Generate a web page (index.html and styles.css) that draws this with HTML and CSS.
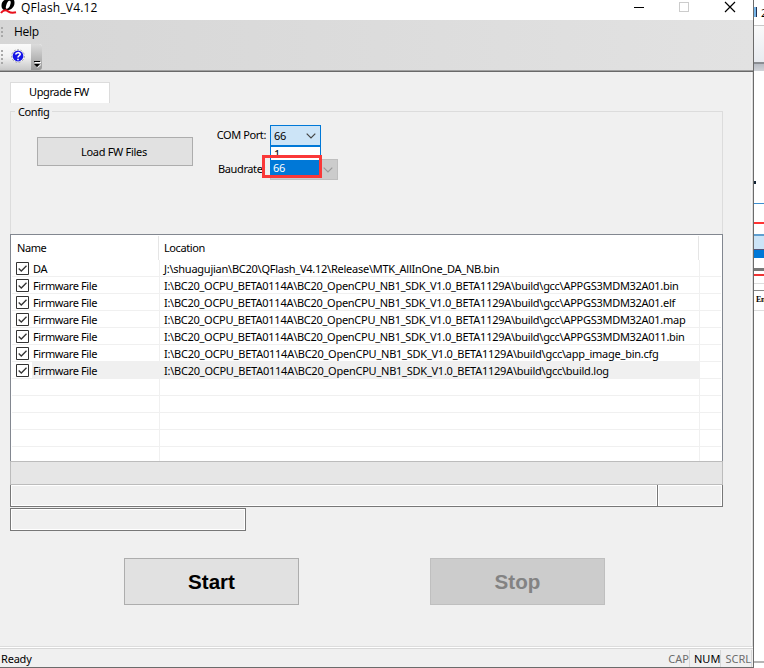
FILE: index.html
```html
<!DOCTYPE html>
<html lang="en">
<head>
<meta charset="utf-8">
<title>QFlash_V4.12</title>
<link rel="stylesheet" href="styles.css">
</head>
<body>
<div class="window">
  <header class="titlebar">
    <svg class="logo" width="17" height="15" viewBox="0 0 17 15"><path d="M8.500-1C4-1 1.500 2 1.500 5.500c0 3.500 2 5 5 5s8-2.500 8-7.500S12-1 8.500-1zM9.500.8c1.500 0 1.500 1.700.7 4.200S8 8.800 6.800 8.800 5.500 7.500 6.300 5 8 .8 9.500.8z" fill="#000" fill-rule="evenodd"/><path d="M1 13c2-3.500 5-3 7.500-1.400s4 1.500 7.500.7" fill="none" stroke="#e8101c" stroke-width="2"/></svg>
    <h1 class="title">QFlash_V4.12</h1>
    <svg class="controls" width="100" height="14" viewBox="0 0 100 14" shape-rendering="crispEdges"><path d="M0 7.500h10" stroke="#000"/><rect x="45.500" y="2.500" width="9" height="9" fill="none" stroke="#ccc"/><path d="M91 2l10 10M101 2l-10 10" stroke="#000" stroke-width="1.200" shape-rendering="auto"/></svg>
  </header>
  <nav class="menubar"><i class="grip"></i><span>Help</span></nav>
  <div class="toolrow">
    <div class="toolbar"><i class="grip tall"></i>
      <svg class="help" width="14" height="14" viewBox="0 0 14 14"><circle cx="7" cy="7" r="6.300" fill="#fff" stroke="#999" stroke-dasharray="2 1.500"/><circle cx="7" cy="7" r="5.400" fill="#1414e6"/><path d="M4.800 5.500C5 3.200 9.200 3 9.200 5.300 9.200 6.700 7 6.700 7 8.500M7 9.700v1.500" fill="none" stroke="#fff" stroke-width="1.600"/></svg>
      <span class="more"><svg width="7" height="8" viewBox="0 0 7 8"><path d="M1 1.500h6M3.500 6.500l3.500-3" stroke="#fff"/><path d="M0 .5h6" stroke="#000"/><path d="M0 3h6L3 6z" fill="#000"/></svg></span>
    </div>
  </div>
  <main class="client">
    <div class="tab">Upgrade FW</div>
    <section class="config">
      <h2 class="legend">Config</h2>
      <button class="load">Load FW Files</button>
      <div class="fields">
        <div class="field"><label>COM Port:</label>
          <div class="combo"><span>66</span><svg width="10" height="6" viewBox="0 0 10 6"><path d="M.7.700L5 5 9.300.7" fill="none" stroke="#444" stroke-width="1.200"/></svg>
            <div class="options"><div class="option first">1</div><div class="option selected">66</div></div>
            <div class="marker"></div>
          </div>
        </div>
        <div class="field baud"><label>Baudrate:</label>
          <div class="combo off"><svg width="10" height="6" viewBox="0 0 10 6"><path d="M.7.700L5 5 9.300.7" fill="none" stroke="#999" stroke-width="1.200"/></svg></div>
        </div>
      </div>
    </section>
    <section class="list">
      <div class="head"><span>Name</span><span>Location</span></div>
      <div class="row"><span class="name"><svg class="check" viewBox="0 0 13 13"><path d="M.5.500h12v12H.5z"/><path d="M2.700 6.500L5.300 9 10.500 3.800"/></svg>DA</span><span class="loc da">J:\shuagujian\BC20\QFlash_V4.12\Release\MTK_AllInOne_DA_NB.bin</span></div>
      <div class="row"><span class="name"><svg class="check" viewBox="0 0 13 13"><path d="M.5.500h12v12H.5z"/><path d="M2.700 6.500L5.300 9 10.500 3.800"/></svg>Firmware File</span><span class="loc">I:\BC20_OCPU_BETA0114A\BC20_OpenCPU_NB1_SDK_V1.0_BETA1129A\build\gcc\APPGS3MDM32A01.bin</span></div>
      <div class="row"><span class="name"><svg class="check" viewBox="0 0 13 13"><path d="M.5.500h12v12H.5z"/><path d="M2.700 6.500L5.300 9 10.500 3.800"/></svg>Firmware File</span><span class="loc">I:\BC20_OCPU_BETA0114A\BC20_OpenCPU_NB1_SDK_V1.0_BETA1129A\build\gcc\APPGS3MDM32A01.elf</span></div>
      <div class="row"><span class="name"><svg class="check" viewBox="0 0 13 13"><path d="M.5.500h12v12H.5z"/><path d="M2.700 6.500L5.300 9 10.500 3.800"/></svg>Firmware File</span><span class="loc">I:\BC20_OCPU_BETA0114A\BC20_OpenCPU_NB1_SDK_V1.0_BETA1129A\build\gcc\APPGS3MDM32A01.map</span></div>
      <div class="row"><span class="name"><svg class="check" viewBox="0 0 13 13"><path d="M.5.500h12v12H.5z"/><path d="M2.700 6.500L5.300 9 10.500 3.800"/></svg>Firmware File</span><span class="loc">I:\BC20_OCPU_BETA0114A\BC20_OpenCPU_NB1_SDK_V1.0_BETA1129A\build\gcc\APPGS3MDM32A011.bin</span></div>
      <div class="row"><span class="name"><svg class="check" viewBox="0 0 13 13"><path d="M.5.500h12v12H.5z"/><path d="M2.700 6.500L5.300 9 10.500 3.800"/></svg>Firmware File</span><span class="loc short">I:\BC20_OCPU_BETA0114A\BC20_OpenCPU_NB1_SDK_V1.0_BETA1129A\build\gcc\app_image_bin.cfg</span></div>
      <div class="row current"><span class="name"><svg class="check" viewBox="0 0 13 13"><path d="M.5.500h12v12H.5z"/><path d="M2.700 6.500L5.300 9 10.500 3.800"/></svg>Firmware File</span><span class="loc short">I:\BC20_OCPU_BETA0114A\BC20_OpenCPU_NB1_SDK_V1.0_BETA1129A\build\gcc\build.log</span></div>
      <div class="row"><span class="name"></span><span class="loc"></span></div>
      <div class="row"><span class="name"></span><span class="loc"></span></div>
      <div class="row"><span class="name"></span><span class="loc"></span></div>
      <div class="row"><span class="name"></span><span class="loc"></span></div>
      <div class="row last"><span class="name"></span><span class="loc"></span></div>
    </section>
    <div class="progress"></div>
    <div class="messages"><div class="pane"></div><div class="pane small"></div></div>
    <div class="pane detail"></div>
    <div class="actions"><button class="action">Start</button><button class="action" disabled>Stop</button></div>
  </main>
  <footer class="status"><span class="ready">Ready</span><span class="key">CAP</span><span class="key on">NUM</span><span class="key">SCRL</span></footer>
</div>
<aside class="behind">
  <div class="b-title"><i></i><span>2</span></div>
  <div class="b-tool"></div>
  <div class="b-edge"></div>
  <div class="b-dot"></div>
  <div class="b-lines"></div>
  <div class="b-text">En</div>
  <div class="b-foot"></div>
</aside>
</body>
</html>
```
FILE: styles.css
```css
* { box-sizing: border-box; }
body { margin: 0; display: flex; width: 764px; height: 668px; overflow: hidden; background: #fff; color: #000; font: 11px/14px "Noto Sans", sans-serif; letter-spacing: -.4px; white-space: nowrap; }
h1, h2 { margin: 0; font-weight: 400; font-size: inherit; }
button { font: inherit; letter-spacing: -.3px; padding: 0; color: #000; background: #e1e1e1; border: 1px solid #adadad; }
svg { display: block; flex: none; }

.window { width: 754px; display: flex; flex-direction: column; background: #f0f0f0; border-right: 1px solid #6b6b6b; border-bottom: 1px solid #6b6b6b; }
.titlebar { height: 20px; background: #fff; display: flex; align-items: flex-start; }
.title { margin-left: 4px; font: 12px/15px "Open Sans", sans-serif; letter-spacing: .18px; }
.controls { margin: 0 19px 0 auto; overflow: visible; }
.menubar { height: 23px; background: linear-gradient(90deg, #d6d6d6, #e2e2e2); display: flex; align-items: center; padding-top: 1px; }
.menubar span { margin-left: 11px; font: 12px/16px "Open Sans", sans-serif; letter-spacing: -.3px; }
.grip { width: 2px; height: 11px; margin-left: 1px; background: repeating-linear-gradient(#a8a8a8 0 2px, transparent 2px 4px); }
.tall { height: 15px; }
.toolrow { height: 29px; background: linear-gradient(90deg, #d6d6d6, #e2e2e2); border-bottom: 1px solid #696969; box-shadow: inset 0 -1px #a0a0a0; }
.toolbar { width: 42px; height: 26px; margin-top: 1px; display: flex; align-items: center; background: linear-gradient(#fafafa, #f0f0f0 50%, #c8c8c8); border-radius: 0 3px 3px 0; overflow: hidden; }
.help { margin: -2px 0 0 8px; }
.more { margin-left: auto; width: 11px; height: 26px; background: linear-gradient(#dcdcdc, #999); padding: 17px 0 0 3px; }

.client { flex: 1; padding: 10px 30px 0 10px; border-right: 1px solid #dcdcdc; box-shadow: inset -1px 0 #f8f8f8; }
.tab { width: 100px; height: 21px; background: #fff; border: 1px solid #dcdcdc; border-bottom: 0; text-align: center; line-height: 18px; padding-right: 2px; }
.config { height: 123px; margin-top: 8px; width: 713px; border: 1px solid #dcdcdc; border-bottom: 0; display: flex; align-items: flex-start; }
.legend { margin: -7px 0 0 4px; padding: 0 3px; width: 43px; background: linear-gradient(90deg, #f0f0f0 37px, transparent 37px); }
.load { width: 156px; height: 29px; margin: 25px 0 0 -21px; padding-right: 2px; }
.fields { margin: 13px 0 0 22px; }
.field { display: flex; align-items: center; height: 21px; width: 130px; }
.field label { width: 55px; text-align: right; flex: none; padding: 0 4px 2px 0; }
.combo { position: relative; width: 51px; height: 21px; flex: none; display: flex; align-items: center; justify-content: space-between; padding: 0 4px 0 3px; border: 1px solid #0078d7; background: #cce4f7; }
.baud { margin-top: 13px; }
.baud label { padding-right: 5px; }
.off { width: 68px; background: #ccc; border-color: #bfbfbf; justify-content: flex-end; }
.options { position: absolute; z-index: 1; left: -1px; top: 20px; width: 51px; border: 1px solid #0078d7; background: #fff; height: 31px; overflow: hidden; }
.option { height: 13px; padding-left: 3px; line-height: 14px; }
.selected { background: #0078d7; color: #fff; height: 17px; line-height: 15px; padding-left: 2px; }
.marker { position: absolute; z-index: 2; left: -9px; top: 29px; width: 60px; height: 23px; border: 3px solid #fa3838; }

.list { width: 713px; height: 227px; border: 1px solid #828790; border-bottom: 0; background: #fff; }
.head { display: grid; grid-template-columns: 148px 540px; height: 25px; padding-top: 1px; line-height: 23px; }
.head span { border-right: 1px solid #e5e5e5; padding-left: 6px; }
.head span + span { padding-left: 5px; }
.row { display: grid; grid-template-columns: 148px 540px 21px; height: 17px; margin: 0 1px; border-bottom: 1px solid #f0f0f0; line-height: 16px; }
.name, .loc { border-right: 1px solid #f0f0f0; height: 17px; }
.name { display: flex; align-items: center; padding-left: 4px; }
.loc { padding-left: 4px; line-height: 17px; letter-spacing: -.28px; }
.da { letter-spacing: -.25px; }
.short { letter-spacing: -.245px; }
.check { width: 13px; height: 13px; margin-right: 4px; fill: #fff; stroke: #333; stroke-width: 1; }
.check path + path { fill: none; stroke-width: 1.300; }
.current { background: linear-gradient(90deg, #fff 20px, #f0f0f0 20px 688px, #fff 688px); }
.last { border: 0; height: 14px; }
.last span { height: 14px; }
.progress { width: 713px; height: 24px; background: #e6e6e6; border: 1px solid #bcbcbc; }
.messages { width: 713px; height: 22px; display: flex; }
.pane { flex: 1; border: 1px solid #777; border-top: 0; box-shadow: inset 0 0 0 1px #fff; }
.small { flex: none; width: 65px; border-left: 0; }
.detail { width: 236px; height: 23px; margin-top: 1px; border-top: 1px solid #777; }
.actions { display: flex; gap: 131px; margin: 27px 0 0 114px; }
.action { width: 175px; height: 47px; font: bold 20.600px/45px "Liberation Sans", sans-serif; letter-spacing: 0; padding: 0; }
.action:disabled { color: #838383; background: #ccc; border-color: #bfbfbf; }
.status { height: 21px; flex: none; border-top: 1px solid #dcdcdc; box-shadow: inset 0 1px #fff, inset 0 2px #d7d7d7; padding: 3px 1px 0 1px; display: flex; line-height: 18px; letter-spacing: 0; }
.ready { margin-right: auto; letter-spacing: -.2px; }
.key { color: #6d6d6d; border-right: 1px solid #d7d7d7; padding: 0 0 0 4px; }
.on { color: #000; }

.behind { width: 10px; overflow: hidden; }
.b-title { height: 26px; border-bottom: 1px solid #c8c8c8; display: flex; gap: 4px; padding-top: 7px; line-height: 12px; }
.b-title i { width: 3px; height: 10px; background: #76b5e8; border-right: 1px solid #235; flex: none; }
.b-tool { height: 38px; background: linear-gradient(#fafafa, #e8ebf0); border-bottom: 2px solid #8a8d92; }
.b-edge { height: 7px; background: linear-gradient(#b8bcc4, #d0d3d8); }
.b-dot { width: 2px; height: 3px; margin-top: 110px; background: #123; }
.b-lines { height: 108px; margin-top: 19px; background: linear-gradient(#3c8ed0 0 1px, #fff 1px 19px, #f33 19px 21px, #fff 21px 31px, #5f9fd0 31px 33px, #cce4f7 33px 46px, #557 46px 47px, #0078d7 47px 55px, #fff 55px 65px, #777 65px 68px, #fff 68px 71px, #e33 71px 73px, #fff 73px 80px, #ddd 80px 81px, #fff 81px 87px, #888 87px 88px, #fff 88px 107px, #ddd 107px 108px); }
.b-text { height: 12px; margin: -17px 0 0 2px; font: bold 8px/12px "Liberation Serif", serif; }
.b-foot { margin-top: 355px; border-top: 2px solid #b4b4b4; }
```
